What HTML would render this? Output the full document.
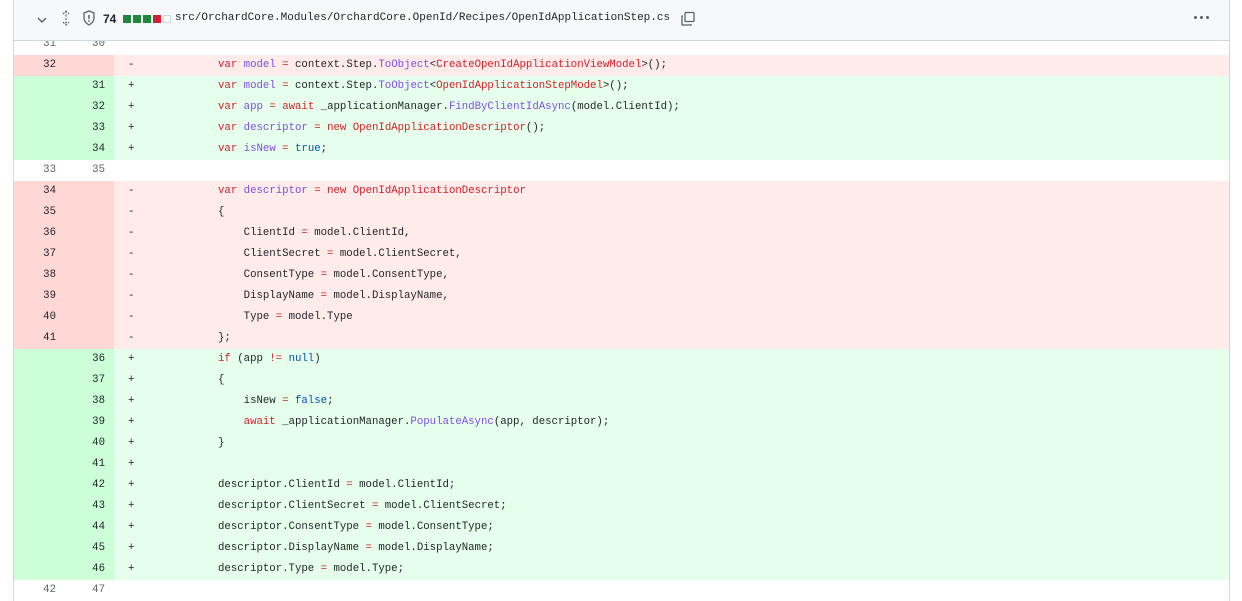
<!DOCTYPE html>
<html><head><meta charset="utf-8"><style>
body{margin:0;width:1242px;height:601px;overflow:hidden;background:#fff;font-family:"Liberation Mono","DejaVu Sans Mono",monospace;}
.box{position:absolute;left:13px;top:0;width:1215px;height:601px;border-left:1px solid #d0d7de;border-right:1px solid #d0d7de;}
.hdr{position:absolute;left:0;top:0;width:1215px;height:40px;background:#f6f8fa;border-bottom:1px solid #d0d7de;z-index:2;font-family:"Liberation Sans",sans-serif;font-size:12px;color:#1f2328;}
.rows{position:absolute;left:0;top:34px;width:1215px;}
.r{height:21px;position:relative;font-size:10.7px;line-height:21px;color:#1f2328;white-space:pre;}
.n1,.n2{position:absolute;top:0;height:21px;text-align:right;color:#59636e;}
.n1{left:0;width:42px;}
.n2{left:50px;width:41px;}
.nb{position:absolute;left:0;top:0;width:100px;height:21px;}
.s{position:absolute;left:114px;}
.c{position:absolute;left:204px;}
.d{background:#ffebe9}.d .nb{background:#ffd7d5}
.a{background:#e6ffec}.a .nb{background:#ccffd8}
.d .n1,.d .n2,.a .n1,.a .n2{color:#1f2328}
.k{color:#cf222e}.p{color:#8250df}.b{color:#0550ae}
</style></head><body>
<div class="box">
<div class="hdr">
<svg style="position:absolute;left:22px;top:14px" width="12" height="12" viewBox="0 0 12 12"><path d="M2 4l4 4 4-4" fill="none" stroke="#59636e" stroke-width="1.4"/></svg>
<svg style="position:absolute;left:45px;top:10px" width="14" height="16" viewBox="0 0 14 16"><path d="M7 1v14M4 4l3-3 3 3M4 12l3 3 3-3" fill="none" stroke="#59636e" stroke-width="1.2" stroke-dasharray="2 1.5"/></svg>
<svg style="position:absolute;left:68px;top:10px" width="14" height="16" viewBox="0 0 14 16"><path d="M7 1L2 3v5c0 3 2.5 5.5 5 7 2.5-1.5 5-4 5-7V3z" fill="none" stroke="#59636e" stroke-width="1.3"/><path d="M7 5v4" stroke="#59636e" stroke-width="1.5"/><circle cx="7" cy="11" r="0.9" fill="#59636e"/></svg>
<span style="position:absolute;left:89px;top:12px;font-weight:bold">74</span>
<span style="position:absolute;left:109px;top:15px;width:8px;height:8px;background:#1f883d"></span>
<span style="position:absolute;left:119px;top:15px;width:8px;height:8px;background:#1f883d"></span>
<span style="position:absolute;left:129px;top:15px;width:8px;height:8px;background:#1f883d"></span>
<span style="position:absolute;left:139px;top:15px;width:8px;height:8px;background:#cf222e"></span>
<span style="position:absolute;left:149px;top:15px;width:6px;height:6px;border:1px solid #d0d7de;background:#f6f8fa"></span>
<span style="position:absolute;left:161px;top:12px;font-family:'Liberation Mono',monospace;font-size:11px">src/OrchardCore.Modules/OrchardCore.OpenId/Recipes/OpenIdApplicationStep.cs</span>
<svg style="position:absolute;left:666px;top:11px" width="16" height="16" viewBox="0 0 16 16"><rect x="5" y="1.5" width="9" height="9" rx="1" fill="none" stroke="#59636e" stroke-width="1.3"/><path d="M3 5H2v9h9v-1" fill="none" stroke="#59636e" stroke-width="1.3"/></svg>
<span style="position:absolute;left:1180px;top:16px;width:3px;height:3px;background:#59636e;border-radius:50%;box-shadow:6px 0 #59636e,12px 0 #59636e"></span>
</div>
<div class="rows">
<div class="r"><span class="n1">31</span><span class="n2">30</span></div>
<div class="r d"><span class="nb"></span><span class="n1">32</span><span class="s">-</span><span class="c"><span class="k">var</span> <span class="p">model</span> <span class="k">=</span> context.Step.<span class="p">ToObject</span>&lt;<span class="k">CreateOpenIdApplicationViewModel</span>&gt;();</span></div>
<div class="r a"><span class="nb"></span><span class="n2">31</span><span class="s">+</span><span class="c"><span class="k">var</span> <span class="p">model</span> <span class="k">=</span> context.Step.<span class="p">ToObject</span>&lt;<span class="k">OpenIdApplicationStepModel</span>&gt;();</span></div>
<div class="r a"><span class="nb"></span><span class="n2">32</span><span class="s">+</span><span class="c"><span class="k">var</span> <span class="p">app</span> <span class="k">=</span> <span class="k">await</span> _applicationManager.<span class="p">FindByClientIdAsync</span>(model.ClientId);</span></div>
<div class="r a"><span class="nb"></span><span class="n2">33</span><span class="s">+</span><span class="c"><span class="k">var</span> <span class="p">descriptor</span> <span class="k">=</span> <span class="k">new</span> <span class="k">OpenIdApplicationDescriptor</span>();</span></div>
<div class="r a"><span class="nb"></span><span class="n2">34</span><span class="s">+</span><span class="c"><span class="k">var</span> <span class="p">isNew</span> <span class="k">=</span> <span class="b">true</span>;</span></div>
<div class="r"><span class="n1">33</span><span class="n2">35</span></div>
<div class="r d"><span class="nb"></span><span class="n1">34</span><span class="s">-</span><span class="c"><span class="k">var</span> <span class="p">descriptor</span> <span class="k">=</span> <span class="k">new</span> <span class="k">OpenIdApplicationDescriptor</span></span></div>
<div class="r d"><span class="nb"></span><span class="n1">35</span><span class="s">-</span><span class="c">{</span></div>
<div class="r d"><span class="nb"></span><span class="n1">36</span><span class="s">-</span><span class="c">    ClientId <span class="k">=</span> model.ClientId,</span></div>
<div class="r d"><span class="nb"></span><span class="n1">37</span><span class="s">-</span><span class="c">    ClientSecret <span class="k">=</span> model.ClientSecret,</span></div>
<div class="r d"><span class="nb"></span><span class="n1">38</span><span class="s">-</span><span class="c">    ConsentType <span class="k">=</span> model.ConsentType,</span></div>
<div class="r d"><span class="nb"></span><span class="n1">39</span><span class="s">-</span><span class="c">    DisplayName <span class="k">=</span> model.DisplayName,</span></div>
<div class="r d"><span class="nb"></span><span class="n1">40</span><span class="s">-</span><span class="c">    Type <span class="k">=</span> model.Type</span></div>
<div class="r d"><span class="nb"></span><span class="n1">41</span><span class="s">-</span><span class="c">};</span></div>
<div class="r a"><span class="nb"></span><span class="n2">36</span><span class="s">+</span><span class="c"><span class="k">if</span> (app <span class="k">!=</span> <span class="b">null</span>)</span></div>
<div class="r a"><span class="nb"></span><span class="n2">37</span><span class="s">+</span><span class="c">{</span></div>
<div class="r a"><span class="nb"></span><span class="n2">38</span><span class="s">+</span><span class="c">    isNew <span class="k">=</span> <span class="b">false</span>;</span></div>
<div class="r a"><span class="nb"></span><span class="n2">39</span><span class="s">+</span><span class="c">    <span class="k">await</span> _applicationManager.<span class="p">PopulateAsync</span>(app, descriptor);</span></div>
<div class="r a"><span class="nb"></span><span class="n2">40</span><span class="s">+</span><span class="c">}</span></div>
<div class="r a"><span class="nb"></span><span class="n2">41</span><span class="s">+</span></div>
<div class="r a"><span class="nb"></span><span class="n2">42</span><span class="s">+</span><span class="c">descriptor.ClientId <span class="k">=</span> model.ClientId;</span></div>
<div class="r a"><span class="nb"></span><span class="n2">43</span><span class="s">+</span><span class="c">descriptor.ClientSecret <span class="k">=</span> model.ClientSecret;</span></div>
<div class="r a"><span class="nb"></span><span class="n2">44</span><span class="s">+</span><span class="c">descriptor.ConsentType <span class="k">=</span> model.ConsentType;</span></div>
<div class="r a"><span class="nb"></span><span class="n2">45</span><span class="s">+</span><span class="c">descriptor.DisplayName <span class="k">=</span> model.DisplayName;</span></div>
<div class="r a"><span class="nb"></span><span class="n2">46</span><span class="s">+</span><span class="c">descriptor.Type <span class="k">=</span> model.Type;</span></div>
<div class="r"><span class="n1">42</span><span class="n2">47</span></div>
</div>
</div>
</body></html>
